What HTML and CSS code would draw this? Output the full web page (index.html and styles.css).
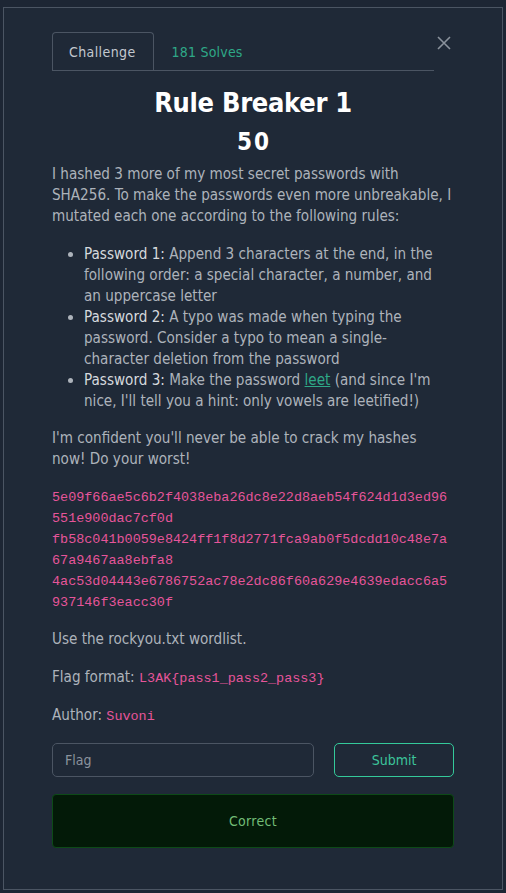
FILE: index.html
```html
<!DOCTYPE html>
<html>
<head>
<meta charset="utf-8">
<link rel="stylesheet" href="styles.css">
</head>
<body>
<div class="modal">
  <div class="header">
    <ul class="tabs">
      <li class="tab active">Challenge</li>
      <li class="tab solves">181 Solves</li>
    </ul>
    <button class="close" aria-label="Close">
      <svg width="14" height="14" viewBox="0 0 14 14"><path d="M1 1L13 13M13 1L1 13" stroke="#8a929c" stroke-width="1.6" fill="none"/></svg>
    </button>
  </div>
  <h2 class="title">Rule Breaker 1</h2>
  <h3 class="points">50</h3>
  <div class="desc">
    <p>I hashed 3 more of my most secret passwords with<br>SHA256. To make the passwords even more unbreakable, I<br>mutated each one according to the following rules:</p>
    <ul class="rules">
      <li><strong>Password 1:</strong> Append 3 characters at the end, in the<br>following order: a special character, a number, and<br>an uppercase letter</li>
      <li><strong>Password 2:</strong> A typo was made when typing the<br>password. Consider a typo to mean a single-<br>character deletion from the password</li>
      <li><strong>Password 3:</strong> Make the password <a href="#">leet</a> (and since I'm<br>nice, I'll tell you a hint: only vowels are leetified!)</li>
    </ul>
    <p>I'm confident you'll never be able to crack my hashes<br>now! Do your worst!</p>
    <p class="hashes"><code>5e09f66ae5c6b2f4038eba26dc8e22d8aeb54f624d1d3ed96551e900dac7cf0d</code><code>fb58c041b0059e8424ff1f8d2771fca9ab0f5dcdd10c48e7a67a9467aa8ebfa8</code><code>4ac53d04443e6786752ac78e2dc86f60a629e4639edacc6a5937146f3eacc30f</code></p>
    <p>Use the rockyou.txt wordlist.</p>
    <p>Flag format: <code>L3AK{pass1_pass2_pass3}</code></p>
    <p class="author">Author: <code>Suvoni</code></p>
  </div>
  <form class="submit-row">
    <input class="flag-input" type="text" placeholder="Flag">
    <button class="submit" type="button">Submit</button>
  </form>
  <div class="result">Correct</div>
</div>
</body>
</html>
```
FILE: styles.css
```css
* { box-sizing: border-box; }
html, body { margin: 0; padding: 0; }
body {
  background: #1d2634;
  font-family: "DejaVu Sans Condensed", "DejaVu Sans", sans-serif;
  width: 506px;
  height: 893px;
  overflow: hidden;
}
.modal {
  margin: 7px 3px 0;
  width: 500px;
  height: 883px;
  background: #1f2937;
  border: 1px solid #4b5563;
  padding: 24px 48px 0;
}
.header {
  display: flex;
  align-items: flex-start;
}
.tabs {
  list-style: none;
  margin: 0;
  padding: 0;
  display: flex;
  flex: 1;
  border-bottom: 1px solid #4b5563;
}
.tab {
  height: 38px;
  padding: 0 16px;
  display: flex;
  align-items: center;
  font-size: 14px;
  letter-spacing: 0.4px;
  color: #c3c8cf;
  border: 1px solid transparent;
  border-bottom: none;
  border-radius: 4px 4px 0 0;
}
.tab.active { border-color: #4b5563; padding-right: 17px; }
.tab.solves { color: #2ea887; padding-left: 17px; letter-spacing: 0.2px; }
.close {
  width: 20px;
  height: 20px;
  margin-top: 1px;
  padding: 0;
  border: none;
  background: none;
  display: flex;
  align-items: center;
  justify-content: center;
}
.title {
  margin: 15px 0 0;
  text-align: center;
  font-size: 27px;
  line-height: 34px;
  font-weight: 700;
  letter-spacing: -0.3px;
  color: #ffffff;
}
.points {
  margin: 8px 0 0;
  padding-left: 2px;
  text-align: center;
  font-size: 24px;
  line-height: 28px;
  font-weight: 700;
  letter-spacing: 2px;
  color: #ffffff;
}
.desc {
  margin-top: 8px;
  font-size: 15.1px;
  line-height: 21px;
  color: #adb3bb;
}
.desc p { margin: 0 0 16.5px; }
.desc p.author { margin-bottom: 15.5px; }
.rules {
  margin: 0 0 16.5px;
  padding-left: 32px;
}
.rules strong { font-weight: normal; color: #d6dade; }
.desc a { color: #2ea887; text-decoration: underline; }
code {
  font-family: "Liberation Mono", monospace;
  font-size: 13.45px;
  color: #e6559a;
}
.hashes code {
  display: block;
  word-break: break-all;
}
.submit-row {
  display: flex;
  gap: 20px;
  margin: 0;
}
.flag-input {
  flex: 1;
  height: 34px;
  background: transparent;
  border: 1px solid #4b5563;
  border-radius: 5px;
  padding: 0 12px;
  font-family: "DejaVu Sans Condensed", "DejaVu Sans", sans-serif;
  font-size: 14px;
  color: #c3c8cf;
  outline: none;
}
.flag-input::placeholder { color: #8b939d; }
.submit {
  width: 120px;
  height: 34px;
  background: transparent;
  border: 1px solid #34c99a;
  border-radius: 5px;
  font-family: "DejaVu Sans Condensed", "DejaVu Sans", sans-serif;
  font-size: 14px;
  color: #3cc59b;
}
.result {
  margin-top: 17px;
  height: 54px;
  border: 1px solid #0d4a17;
  border-radius: 4px;
  background: #031a08;
  color: #72bd76;
  font-size: 14px;
  letter-spacing: 0.3px;
  display: flex;
  align-items: center;
  justify-content: center;
}
```
